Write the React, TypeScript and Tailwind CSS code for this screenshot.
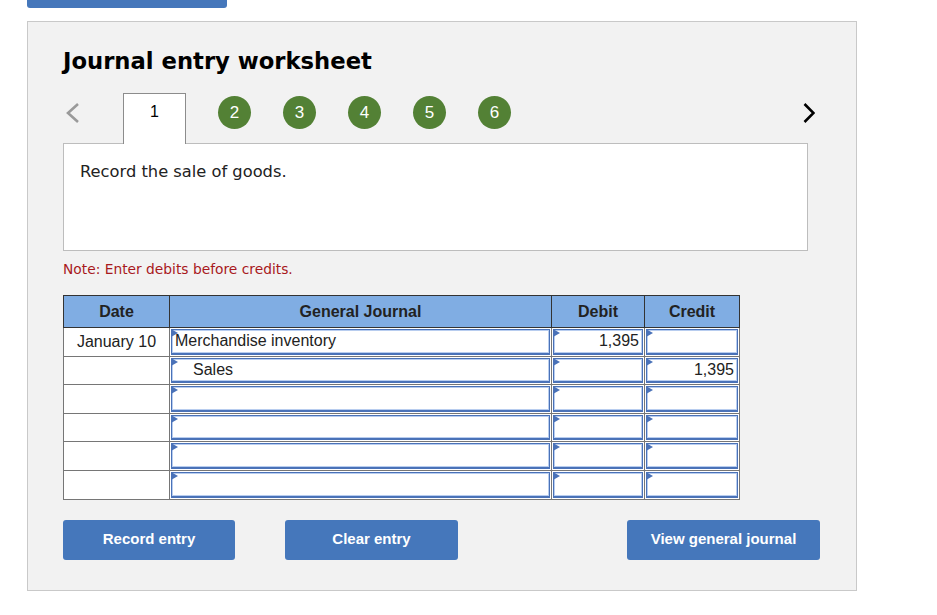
import React from 'react';

const rows = [
    { date: 'January 10', account: 'Merchandise inventory', indent: false, debit: '1,395', credit: '' },
    { date: '', account: 'Sales', indent: true, debit: '', credit: '1,395' },
    { date: '', account: '', indent: false, debit: '', credit: '' },
    { date: '', account: '', indent: false, debit: '', credit: '' },
    { date: '', account: '', indent: false, debit: '', credit: '' },
    { date: '', account: '', indent: false, debit: '', credit: '' },
];

function Field({ value, align = 'left', indent = false }: { value: string; align?: 'left' | 'right'; indent?: boolean }) {
    return (
        <div className="relative h-[25.6px] bg-white border border-[#4a72b8] border-b-2 shadow-[inset_0_0_0_1px_#b8cdef] flex items-center">
            <span className="absolute -left-px -top-px w-0 h-0 border-l-[7px] border-l-[#4a72b8] border-y-[4px] border-y-transparent" />
            <span className={`w-full text-[16px] text-[#222] leading-none ${align === 'right' ? 'text-right pr-[3px]' : indent ? 'pl-[21px]' : 'pl-[3px]'}`}>
                {value}
            </span>
        </div>
    );
}

export default function App() {
    return (
        <div className="min-h-[615px] bg-white" style={{ fontFamily: '"Liberation Sans", Arial, sans-serif' }}>
            <div className="ml-[27px] w-[200px] h-[8px] bg-[#4577bb] rounded-b-[3px]" />

            <div className="ml-[27px] mt-[13px] w-[830px] h-[570px] border border-[#c9c9c9] bg-[#f2f2f2] pl-[35px]">
                <h1
                    className="mt-[26px] text-[22.7px] leading-[26px] font-bold text-black"
                    style={{ fontFamily: '"DejaVu Sans", Verdana, sans-serif' }}
                >
                    Journal entry worksheet
                </h1>

                {/* tabs */}
                <div className="mt-[19px] flex items-start h-[50px]">
                    <svg width="14" height="20" viewBox="0 0 14 20" className="ml-[3px] mt-[10px]">
                        <polyline points="12,1 2,10 12,19" fill="none" stroke="#9a9a9a" strokeWidth="2.6" />
                    </svg>
                    <div className="relative z-10 ml-[43px] w-[63px] h-[51px] bg-white border border-b-0 border-[#8c8c8c] flex justify-center pt-[8px]">
                        <span className="text-[16px] leading-[20px] text-black">1</span>
                    </div>
                    <div className="ml-[32px] mt-[3px] flex gap-[32px]">
                        {[2, 3, 4, 5, 6].map((n) => (
                            <div
                                key={n}
                                className="w-[33px] h-[33px] rounded-full bg-[#538135] text-white text-[17px] flex items-center justify-center"
                            >
                                {n}
                            </div>
                        ))}
                    </div>
                    <svg width="12" height="20" viewBox="0 0 12 20" className="ml-[292px] mt-[10px]">
                        <polyline points="1.5,1 10.5,10 1.5,19" fill="none" stroke="#000" strokeWidth="2.6" />
                    </svg>
                </div>

                <div className="w-[745px] h-[108px] border border-[#bdbdbd] bg-white px-[16px] pt-[19px]">
                    <p className="text-[16.3px] leading-[18px] text-[#222]" style={{ fontFamily: '"DejaVu Sans", Verdana, sans-serif' }}>
                        Record the sale of goods.
                    </p>
                </div>

                <p
                    className="mt-[10px] text-[13.8px] leading-[16px] text-[#a8191d]"
                    style={{ fontFamily: '"DejaVu Sans", Verdana, sans-serif' }}
                >
                    Note: Enter debits before credits.
                </p>

                <table className="mt-[18px] w-[676px] table-fixed border-collapse border border-[#767676]">
                    <colgroup>
                        <col className="w-[106px]" />
                        <col className="w-[382px]" />
                        <col className="w-[93px]" />
                        <col className="w-[95px]" />
                    </colgroup>
                    <thead>
                        <tr className="h-[32px] bg-[#80ade3] text-[16px] font-bold text-[#222]">
                            <th className="border border-[#333] font-bold">Date</th>
                            <th className="border border-[#333] font-bold">General Journal</th>
                            <th className="border border-[#333] font-bold">Debit</th>
                            <th className="border border-[#333] font-bold">Credit</th>
                        </tr>
                    </thead>
                    <tbody>
                        {rows.map((r, i) => (
                            <tr key={i} className="bg-white">
                                <td className="border border-[#767676] text-center text-[16px] text-[#222] p-0">{r.date}</td>
                                <td className="border border-[#767676] p-[1px]">
                                    <Field value={r.account} indent={r.indent} />
                                </td>
                                <td className="border border-[#767676] p-[1px]">
                                    <Field value={r.debit} align="right" />
                                </td>
                                <td className="border border-[#767676] p-[1px]">
                                    <Field value={r.credit} align="right" />
                                </td>
                            </tr>
                        ))}
                    </tbody>
                </table>

                <div className="mt-[20px] flex items-center">
                    <button className="w-[172px] h-[40px] rounded-[3px] bg-[#4577bb] text-white text-[15px] font-bold">
                        Record entry
                    </button>
                    <button className="ml-[50px] w-[173px] h-[40px] rounded-[3px] bg-[#4577bb] text-white text-[15px] font-bold">
                        Clear entry
                    </button>
                    <button className="ml-[169px] w-[193px] h-[40px] rounded-[3px] bg-[#4577bb] text-white text-[15px] font-bold">
                        View general journal
                    </button>
                </div>
            </div>
        </div>
    );
}
